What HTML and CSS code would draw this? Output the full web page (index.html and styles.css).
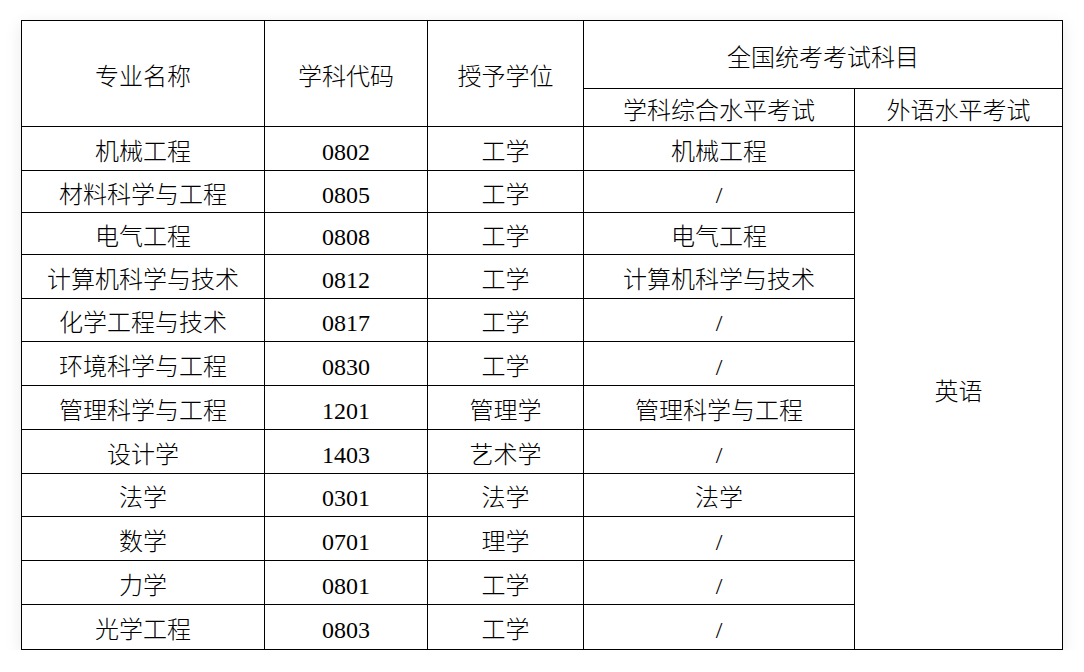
FILE: index.html
```html
<!DOCTYPE html>
<html lang="zh-CN">
<head>
<meta charset="utf-8">
<title>专业目录</title>
<link rel="stylesheet" href="styles.css">
</head>
<body>
<div class="page">
<table class="grid">
  <colgroup>
    <col class="c1"><col class="c2"><col class="c3"><col class="c4"><col class="c5">
  </colgroup>
  <thead>
    <tr class="h1">
      <th rowspan="2">专业名称</th>
      <th rowspan="2">学科代码</th>
      <th rowspan="2">授予学位</th>
      <th colspan="2">全国统考考试科目</th>
    </tr>
    <tr class="h2">
      <th>学科综合水平考试</th>
      <th>外语水平考试</th>
    </tr>
  </thead>
  <tbody>
    <tr><td>机械工程</td><td class="num">0802</td><td>工学</td><td>机械工程</td><td rowspan="12" class="lang">英语</td></tr>
    <tr><td>材料科学与工程</td><td class="num">0805</td><td>工学</td><td class="num">/</td></tr>
    <tr><td>电气工程</td><td class="num">0808</td><td>工学</td><td>电气工程</td></tr>
    <tr><td>计算机科学与技术</td><td class="num">0812</td><td>工学</td><td>计算机科学与技术</td></tr>
    <tr><td>化学工程与技术</td><td class="num">0817</td><td>工学</td><td class="num">/</td></tr>
    <tr><td>环境科学与工程</td><td class="num">0830</td><td>工学</td><td class="num">/</td></tr>
    <tr><td>管理科学与工程</td><td class="num">1201</td><td>管理学</td><td>管理科学与工程</td></tr>
    <tr><td>设计学</td><td class="num">1403</td><td>艺术学</td><td class="num">/</td></tr>
    <tr><td>法学</td><td class="num">0301</td><td>法学</td><td>法学</td></tr>
    <tr><td>数学</td><td class="num">0701</td><td>理学</td><td class="num">/</td></tr>
    <tr><td>力学</td><td class="num">0801</td><td>工学</td><td class="num">/</td></tr>
    <tr><td>光学工程</td><td class="num">0803</td><td>工学</td><td class="num">/</td></tr>
  </tbody>
</table>
</div>
</body>
</html>
```
FILE: styles.css
```css
html, body {
  margin: 0;
  padding: 0;
  background: #ffffff;
}

.page {
  padding: 20px 0 0 21px;
}

.grid {
  border-collapse: collapse;
  table-layout: fixed;
  width: 1041px;
  background: #fff;
  box-shadow: 0 4px 16px rgba(0, 0, 0, 0.09);
  font-family: "Liberation Serif", "Noto Sans CJK SC", serif;
  font-size: 24px;
  font-weight: 300;
  color: #000;
}

.c1 { width: 243px; }
.c2 { width: 163px; }
.c3 { width: 156px; }
.c4 { width: 271px; }
.c5 { width: 208px; }

.grid th,
.grid td {
  border: 1px solid #000;
  padding: 0;
  text-align: center;
  vertical-align: middle;
  font-weight: 300;
  line-height: 1.2;
}

.grid th {
  padding-top: 8px;
}

.h1 { height: 68px; }
.h2 { height: 38px; }

.grid tbody tr { height: 44px; }
.grid tbody tr:nth-child(2),
.grid tbody tr:nth-child(3) { height: 42px; }
.grid tbody tr:nth-child(5),
.grid tbody tr:nth-child(9) { height: 43px; }
.grid tbody tr:nth-child(12) { height: 45px; }

.grid td {
  padding-top: 7px;
}

.num {
  font-weight: 400;
}

.grid td.lang {
  padding-top: 8px;
}
```
